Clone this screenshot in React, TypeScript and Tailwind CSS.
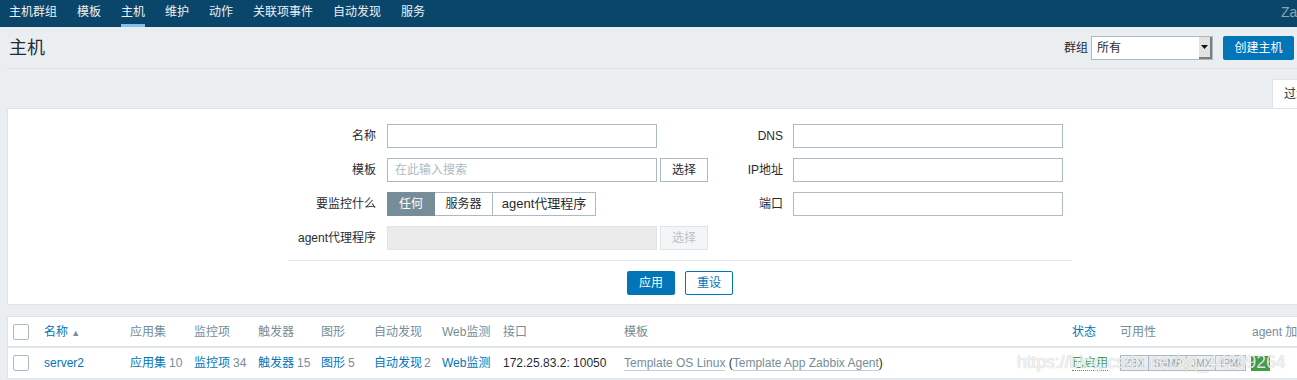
import React from 'react';

const navItems = ['主机群组', '模板', '主机', '维护', '动作', '关联项事件', '自动发现', '服务'];

function Checkbox() {
  return <span className="block w-[16px] h-[16px] border border-[#acbbc2] rounded-[2px] bg-white" />;
}

function FilterLabel({ children, wide }: { children: React.ReactNode; wide?: boolean }) {
  return (
    <div className={`${wide ? 'w-[99px] pr-[11px]' : 'w-[85px] pr-[10px]'} text-right whitespace-nowrap`}>
      {children}
    </div>
  );
}

function TextInput({ placeholder, disabled }: { placeholder?: string; disabled?: boolean }) {
  return (
    <div
      className={`w-[270px] h-[24px] border flex items-center pl-[7px] ${
        disabled ? 'bg-[#ebebeb] border-[#dfe4e7]' : 'bg-white border-[#acbbc2]'
      }`}
    >
      {placeholder && <span className="text-[#acbbc2]">{placeholder}</span>}
    </div>
  );
}

function SelectButton({ disabled }: { disabled?: boolean }) {
  return (
    <button
      className={`ml-[3px] w-[48px] h-[24px] border flex items-center justify-center ${
        disabled ? 'bg-[#f4f5f6] border-[#dfe4e7] text-[#b7c3c9]' : 'bg-white border-[#acbbc2] text-[#1f2c33]'
      }`}
    >
      选择
    </button>
  );
}

export default function App() {
  return (
    <div className="relative w-[1297px] h-[380px] overflow-hidden bg-[#ebeef0] text-[12px] text-[#1f2c33] font-['Liberation_Sans','Noto_Sans_CJK_SC',sans-serif]">
      {/* top nav */}
      <nav className="h-[27px] bg-[#0a466a] flex">
        <ul className="flex gap-[20px] pl-[9px] h-full">
          {navItems.map((item) => (
            <li
              key={item}
              className={`h-full flex items-center border-b-[3px] text-[#eef1f3] ${
                item === '主机' ? 'border-[#7ec2ed]' : 'border-transparent'
              }`}
            >
              {item}
            </li>
          ))}
        </ul>
        <div className="flex-1" />
        <div className="w-[16px] h-[24px] flex items-center whitespace-nowrap text-[14px] text-[#8fa4b2]">Zabbix</div>
      </nav>

      {/* page header */}
      <header className="ml-[7px] pr-[3px] h-[42px] border-b border-[#dbe1e4] flex items-center justify-between">
        <h1 className="pl-[2px] text-[18px] leading-none">主机</h1>
        <div className="flex items-center">
          <span className="mr-[3px]">群组</span>
          <div className="w-[122px] h-[24px] border border-[#acbbc2] bg-white flex items-center justify-between">
            <span className="pl-[5px]">所有</span>
            <span className="w-[13px] h-full bg-[#e2e2e2] border-r-2 border-b-2 border-[#7d7d7d] flex items-center justify-center">
              <svg width="7" height="4" viewBox="0 0 7 4">
                <path d="M0 0h7L3.5 4z" fill="#111" />
              </svg>
            </span>
          </div>
          <button className="ml-[10px] w-[71px] h-[24px] bg-[#0275b8] text-white rounded-[2px]">创建主机</button>
        </div>
      </header>

      {/* filter tab */}
      <div className="ml-[7px] h-[39px] flex justify-end items-end">
        <div className="w-[25px] h-[29px] bg-white border-t border-l border-[#dfe4e7] pl-[11px] leading-[28px] whitespace-nowrap overflow-hidden">
          过滤器
        </div>
      </div>

      {/* filter panel */}
      <section className="ml-[7px] w-[1346px] bg-white border border-[#dfe4e7]">
        <div className="w-[784px] mx-auto pt-[15px]">
          <div className="flex">
            <div className="w-[420px] flex flex-col gap-[10px]">
              <div className="flex items-center h-[24px]">
                <FilterLabel wide>名称</FilterLabel>
                <TextInput />
              </div>
              <div className="flex items-center h-[24px]">
                <FilterLabel wide>模板</FilterLabel>
                <TextInput placeholder="在此输入搜索" />
                <SelectButton />
              </div>
              <div className="flex items-center h-[24px]">
                <FilterLabel wide>要监控什么</FilterLabel>
                <div className="flex h-[24px]">
                  <span className="w-[48px] flex items-center justify-center bg-[#768d99] border border-[#768d99] text-white">任何</span>
                  <span className="w-[58px] flex items-center justify-center border-y border-r border-[#acbbc2]">服务器</span>
                  <span className="w-[103px] flex items-center justify-center border-y border-r border-[#acbbc2] text-[13px]">agent代理程序</span>
                </div>
              </div>
              <div className="flex items-center h-[24px]">
                <FilterLabel wide>agent代理程序</FilterLabel>
                <TextInput disabled />
                <SelectButton disabled />
              </div>
            </div>
            <div className="flex-1 flex flex-col gap-[10px]">
              <div className="flex items-center h-[24px]">
                <FilterLabel>DNS</FilterLabel>
                <TextInput />
              </div>
              <div className="flex items-center h-[24px]">
                <FilterLabel>IP地址</FilterLabel>
                <TextInput />
              </div>
              <div className="flex items-center h-[24px]">
                <FilterLabel>端口</FilterLabel>
                <TextInput />
              </div>
            </div>
          </div>
          <div className="mt-[10px] border-t border-[#e6e9eb] pt-[10px] pb-[9px] flex justify-center gap-[10px]">
            <button className="w-[48px] h-[24px] bg-[#0275b8] text-white rounded-[2px]">应用</button>
            <button className="w-[48px] h-[24px] bg-white border border-[#0275b8] text-[#0275b8] rounded-[2px]">重设</button>
          </div>
        </div>
      </section>

      {/* host table */}
      <section className="ml-[7px] mt-[11px] w-[1346px] bg-white border-t border-l border-[#dfe4e7]">
        <div className="flex items-center h-[31px] border-b-2 border-[#dfe4e7] text-[#768d99] whitespace-nowrap">
          <div className="w-[36px] pl-[5px]"><Checkbox /></div>
          <div className="w-[86px] text-[#0275b8]">名称 <span className="text-[9px] text-[#768d99]">▲</span></div>
          <div className="w-[64px]">应用集</div>
          <div className="w-[64px]">监控项</div>
          <div className="w-[63px]">触发器</div>
          <div className="w-[53px]">图形</div>
          <div className="w-[68px]">自动发现</div>
          <div className="w-[61px]">Web监测</div>
          <div className="w-[121px]">接口</div>
          <div className="w-[448px]">模板</div>
          <div className="w-[48px] text-[#0275b8]">状态</div>
          <div className="w-[132px]">可用性</div>
          <div className="flex-1">agent 加密</div>
        </div>
        <div className="flex items-center h-[31px] border-b border-[#e3e7ea] whitespace-nowrap">
          <div className="w-[36px] pl-[5px]"><Checkbox /></div>
          <div className="w-[86px] text-[#0275b8]">server2</div>
          <div className="w-[64px]"><span className="text-[#0275b8]">应用集</span><span className="ml-[3px] text-[#768d99]">10</span></div>
          <div className="w-[64px]"><span className="text-[#0275b8]">监控项</span><span className="ml-[3px] text-[#768d99]">34</span></div>
          <div className="w-[63px]"><span className="text-[#0275b8]">触发器</span><span className="ml-[3px] text-[#768d99]">15</span></div>
          <div className="w-[53px]"><span className="text-[#0275b8]">图形</span><span className="ml-[3px] text-[#768d99]">5</span></div>
          <div className="w-[68px]"><span className="text-[#0275b8]">自动发现</span><span className="ml-[2px] text-[#768d99]">2</span></div>
          <div className="w-[61px] text-[#0275b8]">Web监测</div>
          <div className="w-[121px]">172.25.83.2: 10050</div>
          <div className="w-[448px]">
            <span className="text-[#768d99] border-b border-[#c4ced3]">Template OS Linux</span>{' '}
            (<span className="text-[#768d99] border-b border-[#c4ced3]">Template App Zabbix Agent</span>)
          </div>
          <div className="w-[48px]">
            <span className="text-[#429e47] border-b border-dotted border-[#429e47]">已启用</span>
          </div>
          <div className="w-[132px] flex text-[10px] text-[#9aa9b1]">
            <span className="h-[16px] px-[4px] flex items-center bg-[#ebeef0] border border-[#acbbc2]">ZBX</span>
            <span className="h-[16px] px-[4px] flex items-center bg-[#ebeef0] border-y border-r border-[#acbbc2]">SNMP</span>
            <span className="h-[16px] px-[4px] flex items-center bg-[#ebeef0] border-y border-r border-[#acbbc2]">JMX</span>
            <span className="h-[16px] px-[4px] flex items-center bg-[#ebeef0] border-y border-r border-[#acbbc2]">IPMI</span>
          </div>
          <div className="flex-1">
            <span className="block w-[19px] h-[15px] -ml-px bg-[#429e47]" />
          </div>
        </div>
      </section>

      {/* watermark */}
      <div className="absolute left-[1017px] top-[352px] text-[17.5px] leading-[20px] whitespace-nowrap text-white/85 font-['Liberation_Sans',sans-serif] [text-shadow:0_0_1px_rgba(0,0,0,0.35)]">
        https://blog.csdn.net/qq_44299264
      </div>
    </div>
  );
}
